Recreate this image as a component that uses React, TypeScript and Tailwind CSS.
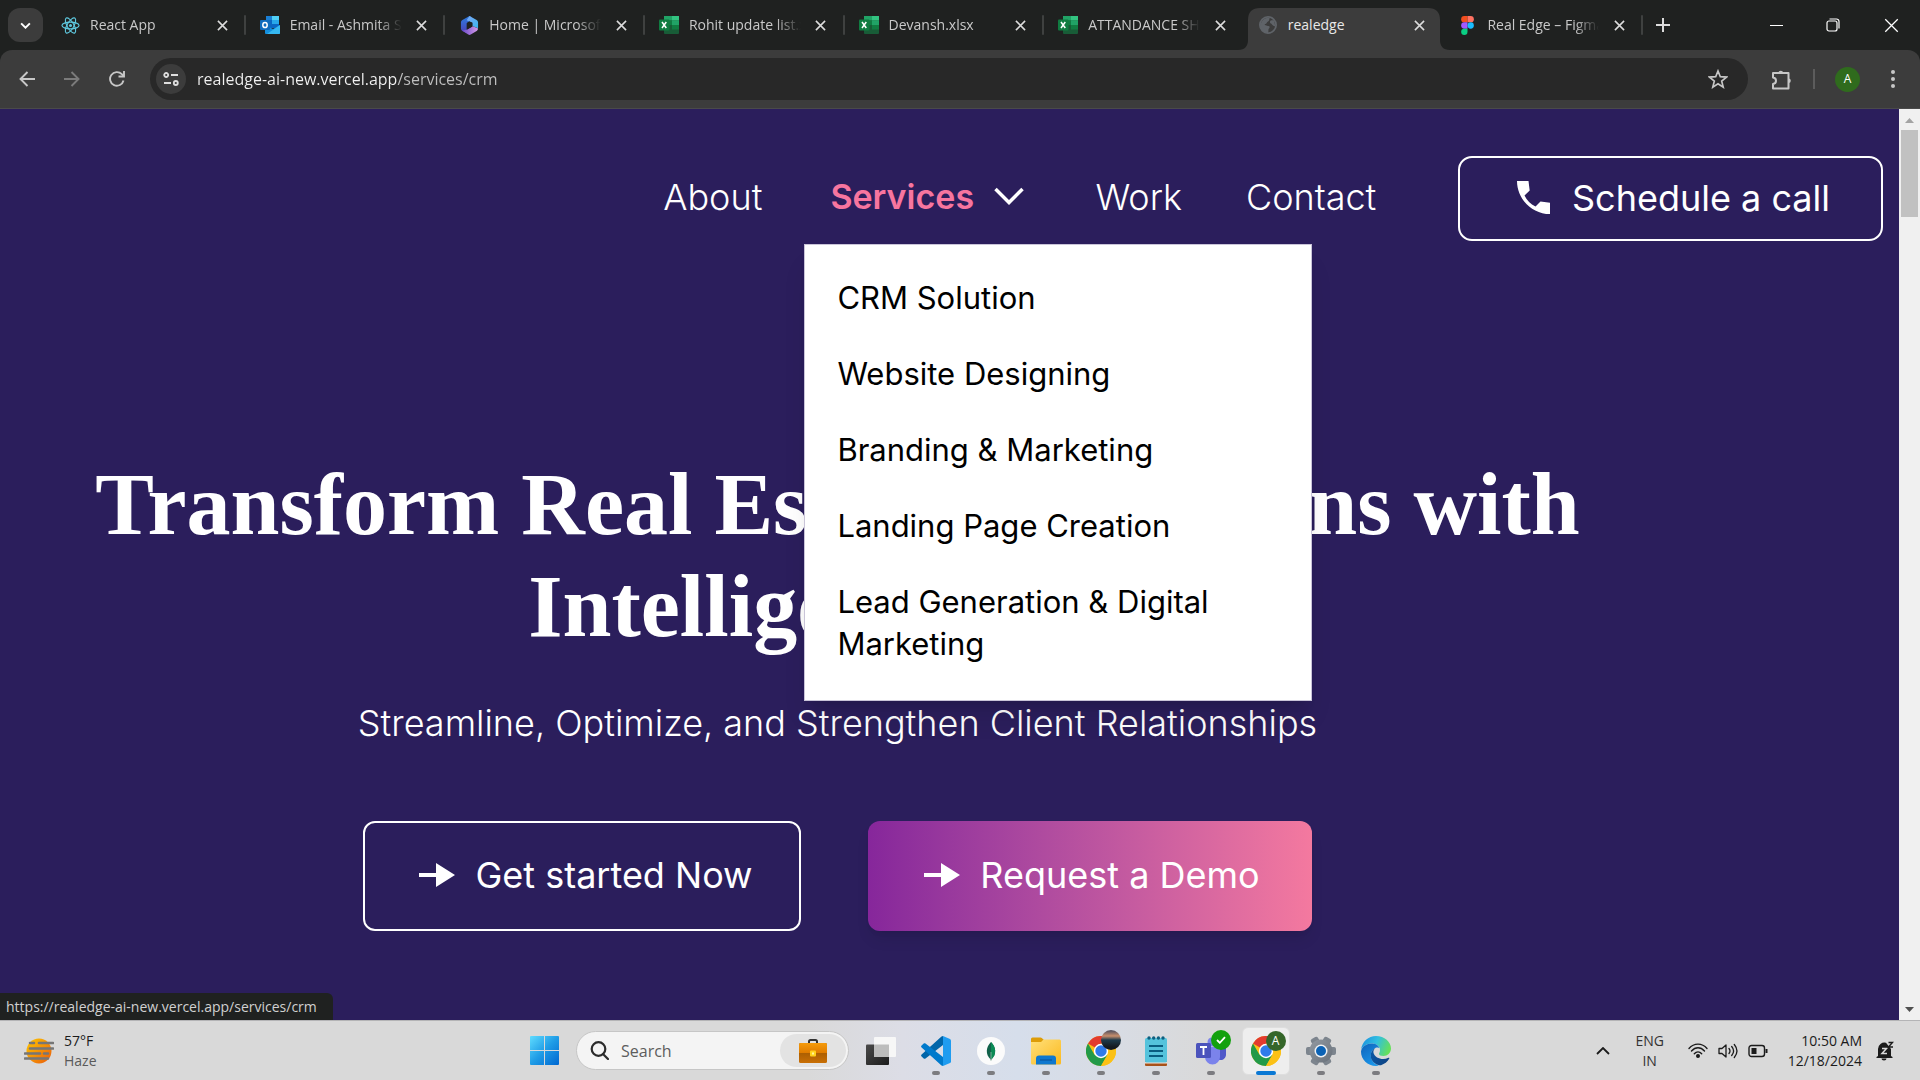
import type { ReactNode } from "react";

const UI = "font-['Open_Sans','Noto_Sans',sans-serif]";

/* ---------- Browser icons ---------- */

const ReactLogo = () => (
  <svg viewBox="0 0 20 20" className="size-[19px]" fill="none" stroke="#5fc9df" strokeWidth="1.2">
    <circle cx="10" cy="10" r="1.6" fill="#5fc9df" stroke="none" />
    <ellipse cx="10" cy="10" rx="9" ry="3.5" />
    <ellipse cx="10" cy="10" rx="9" ry="3.5" transform="rotate(60 10 10)" />
    <ellipse cx="10" cy="10" rx="9" ry="3.5" transform="rotate(120 10 10)" />
  </svg>
);

const OutlookLogo = () => (
  <svg viewBox="0 0 20 18" className="h-[18px] w-5">
    <rect x="6" y="0" width="13" height="12" rx="1" fill="#0a66c2" />
    <rect x="12" y="0" width="7" height="4" fill="#50d0f5" />
    <rect x="6" y="0" width="6" height="4" fill="#1a7fd4" />
    <rect x="12" y="4" width="7" height="4" fill="#28a8ea" />
    <path d="M5 9l8 4 7-4v8a1 1 0 0 1-1 1H6a1 1 0 0 1-1-1z" fill="#1490df" />
    <path d="M20 9v8a1 1 0 0 1-1 1H7z" fill="#35b8f1" />
    <rect x="0" y="4" width="10" height="10" rx="1" fill="#0f6cbd" />
    <ellipse cx="5" cy="9" rx="2.2" ry="2.6" fill="none" stroke="#fff" strokeWidth="1.5" />
  </svg>
);

const OfficeLogo = () => (
  <svg viewBox="0 0 20 20" className="size-[19px]">
    <defs>
      <linearGradient id="of1" x1="0" y1="0" x2="0" y2="1">
        <stop offset="0" stopColor="#2b7de0" />
        <stop offset="1" stopColor="#4c3fb5" />
      </linearGradient>
      <linearGradient id="of2" x1="0" y1="0" x2="1" y2="1">
        <stop offset="0" stopColor="#7fa8f5" />
        <stop offset="1" stopColor="#37b5ee" />
      </linearGradient>
      <linearGradient id="of3" x1="0" y1="0" x2="1" y2="0">
        <stop offset="0" stopColor="#6a48c8" />
        <stop offset="1" stopColor="#d59bea" />
      </linearGradient>
    </defs>
    <path d="M10 0L2.5 4.3C1.6 4.8 1 5.7 1 6.8v6.4c0 1 .6 2 1.5 2.5L7 18V7.5L12 4V1z" fill="url(#of1)" />
    <path d="M10 0l7.5 4.3c.9.5 1.5 1.4 1.5 2.5V13l-6-2.5V7L7 4.500z" fill="url(#of2)" />
    <path d="M2 15.3L8.7 19.600c.8.5 1.8.5 2.6 0l6.2-3.900c.9-.5 1.5-1.5 1.5-2.5l-6-2.7v.5L7 14.5z" fill="url(#of3)" />
    <path d="M13 7v4l-5.500 3.300V7.300l2.500-1.500z" fill="#1f2120" />
  </svg>
);

const ExcelLogo = () => (
  <svg viewBox="0 0 20 18" className="h-[18px] w-5">
    <rect x="5" y="0" width="15" height="18" rx="1" fill="#185c37" />
    <rect x="5" y="0" width="8" height="4.5" fill="#21a366" />
    <rect x="13" y="0" width="7" height="4.5" fill="#33c481" />
    <rect x="5" y="4.5" width="8" height="4.5" fill="#107c41" />
    <rect x="13" y="4.5" width="7" height="4.5" fill="#21a366" />
    <rect x="13" y="9" width="7" height="4.5" fill="#107c41" />
    <rect x="0" y="3.5" width="10.5" height="11" rx="1" fill="#107c41" />
    <path d="M3 6l4.3 6M7.3 6L3 12" stroke="#fff" strokeWidth="1.5" />
  </svg>
);

const GlobeLogo = () => (
  <svg viewBox="0 0 20 20" className="size-[18px]">
    <circle cx="10" cy="10" r="9" fill="#3c3c3c" stroke="#5f6368" strokeWidth="2" />
    <path d="M3 6c3-4 6-4.500 9-4-1 2 0 3-2 4s-1 2.500-3 3 .5 2 3 2 2 2 1 3 0 3-1 5c-5 0-8-3-9-8z" fill="#5f6368" />
    <path d="M13 5c2 0 3-1 4 1l1 5c-2 1-3-1-4-2s-3-2-1-4z" fill="#5f6368" />
  </svg>
);

const FigmaLogo = () => (
  <svg viewBox="0 0 12 18" className="h-[19px] w-[13px]">
    <path d="M3 0h3v6H3a3 3 0 0 1 0-6z" fill="#f24e1e" />
    <path d="M6 0h3a3 3 0 0 1 0 6H6z" fill="#ff7262" />
    <path d="M3 6h3v6H3a3 3 0 0 1 0-6z" fill="#a259ff" />
    <circle cx="9" cy="9" r="3" fill="#1abcfe" />
    <path d="M3 12h3v3a3 3 0 1 1-3-3z" fill="#0acf83" />
  </svg>
);

const Cross = ({ className }: { className: string }) => (
  <svg viewBox="0 0 12 12" className={className} fill="none" stroke="currentColor">
    <path d="M1 1l10 10M11 1L1 11" />
  </svg>
);

type TabInfo = { title: string; icon: ReactNode; active?: boolean; noDivider?: boolean };

const tabs: TabInfo[] = [
  { title: "React App", icon: <ReactLogo /> },
  { title: "Email - Ashmita Singh", icon: <OutlookLogo /> },
  { title: "Home | Microsoft 365", icon: <OfficeLogo /> },
  { title: "Rohit update list.xlsx", icon: <ExcelLogo /> },
  { title: "Devansh.xlsx", icon: <ExcelLogo /> },
  { title: "ATTANDANCE SHEET", icon: <ExcelLogo />, noDivider: true },
  { title: "realedge", icon: <GlobeLogo />, active: true },
  { title: "Real Edge – Figma", icon: <FigmaLogo /> },
];

function Tab({ title, icon, active, noDivider }: TabInfo) {
  return (
    <div className="relative flex h-[50px] w-[200px] shrink items-center pl-3">
      {active && (
        <svg
          viewBox="0 0 212 42"
          preserveAspectRatio="none"
          className="absolute top-2 -left-[6px] h-[42px] w-[212px]"
          fill="#3c3c3c"
        >
          <path d="M0 42c7 0 10-4 10-10V12C10 4 14 0 22 0h168c8 0 12 4 12 12v20c0 6 3 10 10 10z" />
        </svg>
      )}
      <div className="relative flex w-full items-center">
        <span className="flex w-6 shrink-0 justify-center">{icon}</span>
        <span
          className={
            active
              ? "ml-2 w-[112px] overflow-hidden text-sm whitespace-nowrap text-[#e8e8e8]"
              : "ml-2 w-[112px] overflow-hidden [mask-image:linear-gradient(to_right,black_78%,transparent)] text-sm whitespace-nowrap text-[#c9c9c9]"
          }
        >
          {title}
        </span>
        <button aria-label={`Close ${title}`} className="ml-3 flex size-4 shrink-0 items-center justify-center text-[#dcdcdc]">
          <Cross className="size-[11px] stroke-[1.7]" />
        </button>
      </div>
      {!active && !noDivider && <span className="absolute right-0 h-5 w-0.5 rounded bg-[#3f4140]" />}
    </div>
  );
}

function TabStrip() {
  return (
    <div className="flex h-[50px] items-center bg-[#1f2120]">
      <button aria-label="Search tabs" className="ml-2 flex h-[34px] w-[35px] items-center justify-center rounded-xl bg-[#3c3c3c] text-white">
        <svg viewBox="0 0 12 8" className="h-[7px] w-[11px]" fill="none" stroke="currentColor" strokeWidth="2.2">
          <path d="M1 1.5l5 5 5-5" />
        </svg>
      </button>
      <div className="ml-[3px] flex w-[1597px] min-w-0">
        {tabs.map((t) => (
          <Tab key={t.title} {...t} />
        ))}
      </div>
      <button aria-label="New tab" className="ml-[11px] flex size-[18px] items-center justify-center text-[#dcdcdc]">
        <svg viewBox="0 0 14 14" className="size-[14px]" fill="none" stroke="currentColor" strokeWidth="2">
          <path d="M7 0v14M0 7h14" />
        </svg>
      </button>
      <div className="ml-auto flex items-center text-white">
        <button aria-label="Minimize" className="flex h-8 w-14 items-center justify-center">
          <span className="h-px w-[13px] bg-white" />
        </button>
        <button aria-label="Restore" className="flex h-8 w-[58px] items-center justify-center">
          <svg viewBox="0 0 14 14" className="size-[14px]" fill="none" stroke="currentColor" strokeWidth="1.2">
            <rect x="1" y="3" width="10" height="10" rx="2" />
            <path d="M3.5 1H10.5a2.5 2.5 0 0 1 2.5 2.5V10.5" />
          </svg>
        </button>
        <button aria-label="Close window" className="flex h-8 w-[58px] items-center justify-center">
          <Cross className="size-[15px] stroke-[1]" />
        </button>
      </div>
    </div>
  );
}

function Toolbar() {
  return (
    <div className="bg-[#1f2120]">
      <div className="flex h-[59px] items-center rounded-t-xl border-b border-[#4a4a4a] bg-[#3c3c3c] pr-[17px] pl-[17px] text-[#c7c7c7]">
        <button aria-label="Back" className="flex size-5 items-center justify-center">
          <svg viewBox="0 0 16 16" className="size-4" fill="none" stroke="currentColor" strokeWidth="1.9">
            <path d="M16 8H2M8.5 1L1.5 8l7 7" />
          </svg>
        </button>
        <button aria-label="Forward" className="ml-[25px] flex size-5 items-center justify-center text-[#7b7b7b]">
          <svg viewBox="0 0 16 16" className="size-4" fill="none" stroke="currentColor" strokeWidth="1.9">
            <path d="M0 8h14M7.5 1l7 7-7 7" />
          </svg>
        </button>
        <button aria-label="Reload" className="ml-[25px] flex size-5 items-center justify-center">
          <svg viewBox="0 0 16 16" className="size-4" fill="none" stroke="currentColor" strokeWidth="1.9">
            <path d="M14.5 9.5A6.8 6.8 0 1 1 12.8 3.2L14.5 5" />
            <path d="M15 0v5.5H9.5" />
          </svg>
        </button>
        <div className="ml-[23px] flex h-[42px] flex-1 items-center rounded-full bg-[#282828] pr-5 pl-[6px]">
          <button aria-label="View site information" className="flex size-[30px] items-center justify-center rounded-full bg-[#3c3c3c]">
            <svg viewBox="0 0 16 14" className="h-[14px] w-4" fill="none" stroke="#dedede" strokeWidth="1.8">
              <circle cx="3.2" cy="3" r="2" />
              <path d="M8 3h7M1 11h7" />
              <circle cx="12.8" cy="11" r="2" />
            </svg>
          </button>
          <input
            aria-label="Address"
            defaultValue="realedge-ai-new.vercel.app/services/crm"
            className="ml-[11px] flex-1 bg-[linear-gradient(to_right,#f2f2f2_201px,#c0c0c0_201px)] bg-clip-text text-base text-transparent outline-none"
          />
          <button aria-label="Bookmark this tab" className="flex size-5 items-center justify-center">
            <svg viewBox="0 0 20 20" className="size-5" fill="none" stroke="currentColor" strokeWidth="1.7">
              <path d="M10 2l2.3 5.7 6.2.4-4.8 4 1.5 6L10 14.8 4.8 18.1l1.5-6-4.8-4 6.2-.4z" />
            </svg>
          </button>
        </div>
        <button aria-label="Extensions" className="ml-[23px] flex size-[21px] items-center justify-center">
          <svg viewBox="0 0 21 21" className="size-[21px]" fill="none" stroke="currentColor" strokeWidth="2">
            <path d="M2 4h15.5v15.5H2v-4.5c4-.5 4-6 0-6.500z" strokeLinejoin="round" />
            <path d="M7.5 4a2.3 2.3 0 0 1 4.6 0zM17.5 9.5a2.3 2.3 0 0 1 0 4.6z" fill="currentColor" stroke="none" />
          </svg>
        </button>
        <span className="ml-[21px] h-5 w-0.5 bg-[#5c5c5c]" />
        <button aria-label="Profile" className="ml-[20px] flex size-[25px] items-center justify-center rounded-full bg-[#2f6b1d] text-xs text-white">
          A
        </button>
        <button aria-label="Menu" className="ml-[23px] flex h-5 w-5 items-center justify-center">
          <svg viewBox="0 0 4 18" className="h-[18px] w-1" fill="currentColor">
            <circle cx="2" cy="2" r="2" />
            <circle cx="2" cy="9" r="2" />
            <circle cx="2" cy="16" r="2" />
          </svg>
        </button>
      </div>
    </div>
  );
}

/* ---------- Website ---------- */

const services = ["CRM Solution", "Website Designing", "Branding & Marketing", "Landing Page Creation", "Lead Generation & Digital Marketing"];

const ArrowIcon = () => (
  <svg viewBox="0 0 36 24" className="h-6 w-9 shrink-0" fill="currentColor">
    <path d="M0 10h17V0l19 12-19 12V14H0z" />
  </svg>
);

function SiteNav() {
  return (
    <header className="flex h-[132px] items-end justify-end pr-4">
      <nav className="flex h-[85px] items-center text-4xl font-light text-white">
        <a href="#about" className="pb-1">
          About
        </a>
        <div className="relative ml-[68px] flex h-full items-center">
          <button aria-expanded="true" className="flex w-[194px] items-center justify-between pb-1 text-[34px] font-semibold text-[#f7759f]">
            Services
            <svg viewBox="0 0 30 18" className="h-[18px] w-[30px] text-white" fill="none" stroke="currentColor" strokeWidth="3.5">
              <path d="M1.5 2L15 15.5 28.5 2" />
            </svg>
          </button>
          <ul className="absolute top-full -left-[26px] z-10 mt-[3px] flex w-[508px] flex-col gap-[34px] border border-[#c9c4d8] bg-white px-8 pt-8 pb-[35px] text-[31px] leading-[42px] font-normal text-black shadow-xl">
            {services.map((s) => (
              <li key={s}>
                <a href="#services" className="block">
                  {s}
                </a>
              </li>
            ))}
          </ul>
        </div>
        <a href="#work" className="ml-[71px] pb-1">
          Work
        </a>
        <a href="#contact" className="ml-[64px] w-[136px] pb-1">
          Contact
        </a>
        <button className="ml-[76px] flex h-full w-[425px] items-center justify-center gap-[22px] rounded-[14px] border-2 border-white pb-[2px] pl-[6px] font-normal">
          <svg viewBox="0 0 33 33" className="size-[33px]" fill="currentColor">
            <path d="M0 0H11.500L12.700 9.500 7.500 14.500C10 19.500 13.500 23 18.500 25.500L23.500 20.500 33 21.700V33C15 33 0 18 0 0z" />
          </svg>
          Schedule a call
        </button>
      </nav>
    </header>
  );
}

function Hero() {
  return (
    <section className="flex flex-col items-center pt-[213px] pr-[224px] text-center text-white">
      <h1 className="font-['Liberation_Serif',serif] text-[88px] leading-[102px] font-bold whitespace-nowrap">
        Transform Real Estate Operations with
        <br />
        Intelligent CRM
      </h1>
      <p className="mt-[38px] text-4xl leading-[54px] font-light">Streamline, Optimize, and Strengthen Client Relationships</p>
      <div className="mt-[71px] flex gap-[67px] text-4xl font-normal">
        <button className="flex h-[110px] w-[438px] items-center justify-center gap-5 rounded-xl border-2 border-white pb-[2px] pl-2">
          <ArrowIcon />
          Get started Now
        </button>
        <button className="flex h-[110px] w-[444px] items-center justify-center gap-5 rounded-xl bg-linear-to-r from-[#86269b] to-[#f4799f] pb-[2px] pl-1 shadow-lg">
          <ArrowIcon />
          Request a Demo
        </button>
      </div>
    </section>
  );
}

function ScrollBar() {
  return (
    <div className="flex w-[21px] shrink-0 flex-col items-center bg-[#f0f0f0]">
      <svg viewBox="0 0 9 5" className="mt-[9px] h-[5px] w-[9px]" fill="#a3a3a3">
        <path d="M4.500 0L9 5H0z" />
      </svg>
      <div className="mt-[7px] h-[87px] w-[17px] bg-[#c1c1c1]" />
      <svg viewBox="0 0 9 5" className="mt-auto mb-2 h-[5px] w-[9px]" fill="#505050">
        <path d="M4.500 5L9 0H0z" />
      </svg>
    </div>
  );
}

/* ---------- Taskbar ---------- */

const StartIcon = () => (
  <svg viewBox="0 0 29 29" className="size-[29px]">
    <defs>
      <linearGradient id="win" x1="0" y1="0" x2="1" y2="1">
        <stop offset="0" stopColor="#5fdcff" />
        <stop offset="0.5" stopColor="#1f9ce6" />
        <stop offset="1" stopColor="#0067d1" />
      </linearGradient>
    </defs>
    <path d="M1 0h13v14H0V1a1 1 0 0 1 1-1zM15 0h13a1 1 0 0 1 1 1v13H15zM0 15h14v14H1a1 1 0 0 1-1-1zM15 15h14v13a1 1 0 0 1-1 1H15z" fill="url(#win)" />
  </svg>
);

const Briefcase = () => (
  <svg viewBox="0 0 28 24" className="h-6 w-7">
    <defs>
      <linearGradient id="bc" x1="0" y1="0" x2="0" y2="1">
        <stop offset="0" stopColor="#f59b0b" />
        <stop offset="1" stopColor="#e07c00" />
      </linearGradient>
      <linearGradient id="bc2" x1="0" y1="0" x2="0" y2="1">
        <stop offset="0" stopColor="#8f4f00" />
        <stop offset="1" stopColor="#c96f05" />
      </linearGradient>
    </defs>
    <path d="M10 4V2.5C10 1.7 10.7 1 11.5 1h5c.8 0 1.5.7 1.5 1.5V4" fill="none" stroke="#333" strokeWidth="2" />
    <rect x="0" y="4" width="28" height="20" rx="1.5" fill="url(#bc2)" />
    <path d="M1.5 4h25A1.5 1.5 0 0 1 28 5.5V14H0V5.5A1.5 1.5 0 0 1 1.500 4z" fill="url(#bc)" />
    <rect x="11" y="11.5" width="6" height="6" rx="1" fill="#ffd21c" />
    <rect x="13" y="13.5" width="2" height="2" fill="#fff3a0" />
  </svg>
);

const TaskViewIcon = () => (
  <svg viewBox="0 0 30 28" className="h-7 w-[30px]">
    <defs>
      <linearGradient id="tv" x1="0" y1="0" x2="1" y2="1">
        <stop offset="0" stopColor="#4a4a4a" />
        <stop offset="1" stopColor="#1c1c1c" />
      </linearGradient>
    </defs>
    <rect x="0" y="7.5" width="23" height="20.5" rx="1" fill="url(#tv)" />
    <rect x="8" y="0" width="22" height="20" rx="1" fill="#f7f7f7" />
    <path d="M8 7.5h15V20H9a1 1 0 0 1-1-1z" fill="#bdbdbd" />
  </svg>
);

const VSCodeIcon = () => (
  <svg viewBox="0 0 30 30" className="size-[30px]">
    <path d="M22 0v9L4.5 22.5c-.6.5-1.3.4-1.8 0L.6 20.6c-.7-.6-.7-1.5 0-2.1L20.5.4z" fill="#0065a9" />
    <path d="M22 30v-9L4.5 7.5c-.6-.5-1.3-.4-1.8 0L.6 9.4c-.7.6-.7 1.5 0 2.1L20.5 29.6z" fill="#007acc" />
    <path d="M22 0l7 3c.6.3 1 .9 1 1.6v20.8c0 .7-.4 1.3-1 1.6l-7 3z" fill="#1f9cf0" />
  </svg>
);

const MongoIcon = () => (
  <svg viewBox="0 0 28 28" className="size-7">
    <circle cx="14" cy="14" r="14" fill="#fbfbfb" />
    <path d="M14 5c5 5 6 12 .4 17.5L14 24l-.4-1.5C8 17 9 10 14 5z" fill="#116149" />
    <path d="M14 5c5 5 6 12 .4 17.5L14 22z" fill="#0b8a55" />
    <path d="M13.7 15h.6v9h-.6z" fill="#c5d5ca" />
  </svg>
);

const FolderIcon = () => (
  <svg viewBox="0 0 30 28" className="h-7 w-[30px]">
    <defs>
      <linearGradient id="fo" x1="0" y1="0" x2="1" y2="1">
        <stop offset="0" stopColor="#ffe07a" />
        <stop offset="1" stopColor="#fbb91f" />
      </linearGradient>
    </defs>
    <path d="M0 2a1.5 1.5 0 0 1 1.5-1.5h8c.5 0 1 .2 1.3.6L13 3v5H0z" fill="#dd9c08" />
    <path d="M10 5l2.5-2.5H28.5A1.5 1.5 0 0 1 30 4v22a1.5 1.5 0 0 1-1.5 1.5h-27A1.5 1.5 0 0 1 0 26V5z" fill="url(#fo)" />
    <path d="M5 27.5v-6a3 3 0 0 1 3-3h14a3 3 0 0 1 3 3v6z" fill="#0f78cf" />
    <path d="M9 23h12" stroke="#0a4f96" strokeWidth="1" />
  </svg>
);

const ChromeIcon = () => (
  <svg viewBox="0 0 30 30" className="size-[30px]">
    <circle cx="15" cy="15" r="15" fill="#fbc116" />
    <path d="M15 15L2 7.5A15 15 0 0 1 28 7.5H15z" fill="#e33b2e" />
    <path d="M2 7.5A15 15 0 0 0 15 30l6.500-11.250L15 15 8.500 18.750z" fill="#229a48" />
    <path d="M28 7.500H15l6.500 11.250L15 30A15 15 0 0 0 28 7.500z" fill="#fbc116" />
    <circle cx="15" cy="15" r="7.2" fill="#fff" />
    <circle cx="15" cy="15" r="5.7" fill="#2f7bea" />
  </svg>
);

const NotepadIcon = () => (
  <svg viewBox="0 0 22 30" className="h-[30px] w-[22px]">
    <rect x="0" y="25" width="22" height="5" rx="1" fill="#a8521a" />
    <rect x="0" y="26" width="22" height="1.5" fill="#f2e6dc" />
    <rect x="0" y="2" width="22" height="24.5" rx="1.5" fill="#55c3dc" />
    <path d="M4 10h14M4 15h14M4 20h14" stroke="#0a5d80" strokeWidth="2" />
    <g fill="#0e5f7f">
      <circle cx="4" cy="2" r="1.7" />
      <circle cx="8.7" cy="2" r="1.7" />
      <circle cx="13.4" cy="2" r="1.7" />
      <circle cx="18" cy="2" r="1.7" />
    </g>
  </svg>
);

const TeamsIcon = () => (
  <svg viewBox="0 0 30 28" className="h-7 w-[30px]">
    <circle cx="24.5" cy="6" r="3.5" fill="#5059c9" />
    <path d="M20 10h9a1 1 0 0 1 1 1v7a5.500 5.500 0 0 1-8 4.500z" fill="#5059c9" />
    <circle cx="16" cy="5" r="4.5" fill="#7b83eb" />
    <path d="M9 10h14a1 1 0 0 1 1 1v9a7.500 7.500 0 0 1-15 0z" fill="#7b83eb" />
    <rect x="0" y="6" width="15" height="15" rx="1.5" fill="#4b53bc" />
    <path d="M4 10h7M7.5 10v8" stroke="#fff" strokeWidth="1.8" />
  </svg>
);

const GearIcon = () => (
  <svg viewBox="0 0 30 30" className="size-[30px]">
    <defs>
      <linearGradient id="ge" x1="0" y1="0" x2="1" y2="1">
        <stop offset="0" stopColor="#939aa2" />
        <stop offset="1" stopColor="#68707a" />
      </linearGradient>
    </defs>
    <g fill="#7d858e">
      <rect x="11" y="0" width="8" height="30" rx="2" transform="rotate(30 15 15)" />
      <rect x="11" y="0" width="8" height="30" rx="2" transform="rotate(90 15 15)" />
      <rect x="11" y="0" width="8" height="30" rx="2" transform="rotate(150 15 15)" />
    </g>
    <circle cx="15" cy="15" r="11.5" fill="url(#ge)" />
    <circle cx="15" cy="15" r="6.5" fill="#eef1f4" />
    <circle cx="15" cy="15" r="5" fill="#0b62b5" />
  </svg>
);

const EdgeIcon = () => (
  <svg viewBox="0 0 30 30" className="size-[30px]">
    <defs>
      <linearGradient id="ed1" x1="0" y1="0.2" x2="1" y2="0.5">
        <stop offset="0" stopColor="#1b8fe0" />
        <stop offset="0.5" stopColor="#31bfe0" />
        <stop offset="1" stopColor="#66e05a" />
      </linearGradient>
      <linearGradient id="ed2" x1="0" y1="0" x2="0.6" y2="1">
        <stop offset="0" stopColor="#0f62ba" />
        <stop offset="1" stopColor="#1a96ea" />
      </linearGradient>
      <linearGradient id="ed3" x1="0" y1="0" x2="1" y2="0.5">
        <stop offset="0" stopColor="#0a5aa8" />
        <stop offset="1" stopColor="#0e4587" />
      </linearGradient>
    </defs>
    <path d="M0 14C1 5.5 7.5 0 15 0c8.5 0 15 6 15 12.5 0 4.5-3.5 7.5-7.5 7.5-3 0-4.5-1-4.5-2s1-1.5 1-4c0-4-3.5-6.500-8-6.500-6 0-10 3.500-11 6.500z" fill="url(#ed1)" />
    <path d="M0 15.5C.5 10.5 5.5 7.5 11 7.5c4 0 6.5 2 7.5 4.5-2-1.500-7 0-8.500 5.500-1.200 5 2 10.500 8 12-1 .3-2 .5-3 .5C6.5 30 0 23.5 0 15.5z" fill="url(#ed2)" />
    <path d="M14.5 12c-5.500 2.500-6 9-3 13 3 4 7 4.500 8.500 4.200 3.500-1.200 6.500-3.400 8.300-6.700.3-.6-.3-1-.9-.7C22 24.500 14 22.500 12.500 17c-.4-2 .4-4 2-5z" fill="url(#ed3)" />
  </svg>
);

const ProfileBadge = ({ photo }: { photo?: boolean }) => (
  <span
    className={
      photo
        ? "absolute top-[3px] right-[5px] size-5 rounded-full bg-[linear-gradient(to_bottom,#5b5560_5%,#c98f6c_30%,#1d3a4c_50%,#14191f_85%)]"
        : "absolute top-[3px] right-[3px] flex size-5 items-center justify-center rounded-full bg-[#35662a] text-xs text-white"
    }
  >
    {photo ? "" : "A"}
  </span>
);

const CheckBadge = () => (
  <span className="absolute top-[3px] right-[5px] flex size-5 items-center justify-center rounded-full bg-[#13a10e]">
    <svg viewBox="0 0 10 8" className="h-2 w-[10px]" fill="none" stroke="#fff" strokeWidth="1.8">
      <path d="M1 4l2.8 2.8L9 1.2" />
    </svg>
  </span>
);

type TaskApp = { name: string; icon: ReactNode; badge?: ReactNode; state?: "open" | "active" };

const apps: TaskApp[] = [
  { name: "Task view", icon: <TaskViewIcon /> },
  { name: "Visual Studio Code", icon: <VSCodeIcon />, state: "open" },
  { name: "MongoDB Compass", icon: <MongoIcon />, state: "open" },
  { name: "File Explorer", icon: <FolderIcon />, state: "open" },
  { name: "Chrome", icon: <ChromeIcon />, badge: <ProfileBadge photo />, state: "open" },
  { name: "Notepad", icon: <NotepadIcon />, state: "open" },
  { name: "Teams", icon: <TeamsIcon />, badge: <CheckBadge />, state: "open" },
  { name: "Chrome (A)", icon: <ChromeIcon />, badge: <ProfileBadge />, state: "active" },
  { name: "Settings", icon: <GearIcon />, state: "open" },
  { name: "Edge", icon: <EdgeIcon />, state: "open" },
];

function TaskButton({ name, icon, badge, state }: TaskApp) {
  return (
    <div className="flex w-[55px] justify-center">
      <button
        aria-label={name}
        className={
          state === "active"
            ? "relative flex h-12 w-12 items-center justify-center rounded-md border border-[#dedede] bg-[#eeeeee]"
            : "relative flex h-12 w-[50px] items-center justify-center"
        }
      >
        {icon}
        {badge}
        {state === "open" && <span className="absolute bottom-0 h-1 w-2 rounded-full bg-[#7c7c80]" />}
        {state === "active" && <span className="absolute -bottom-px h-1 w-5 rounded-full bg-[#0a78d4]" />}
      </button>
    </div>
  );
}

function Taskbar() {
  return (
    <footer className="grid h-[60px] shrink-0 grid-cols-[1fr_auto_1fr] items-center border-t border-[#b4b4b6] bg-[linear-gradient(to_right,#d9d9d9_42%,#dcdde6_47%,#d6deeb_53%,#d8dce4_58%,#d9d9d9_63%)] text-sm leading-5 text-[#1b1b1b]">
      <button className="flex items-center gap-[10px] pl-6 text-left">
        <svg viewBox="0 0 30 26" className="h-[26px] w-[30px]">
          <defs>
            <linearGradient id="haze" x1="0" y1="0" x2="1" y2="1">
              <stop offset="0" stopColor="#ffc800" />
              <stop offset="1" stopColor="#e95b0c" />
            </linearGradient>
          </defs>
          <circle cx="15" cy="13" r="12.5" fill="url(#haze)" />
          <path d="M6 5h4M15 5h14M6 10.5h23M1 15.5h15M20 15.5h4M1 20.5h23" stroke="#767676" strokeWidth="2.6" strokeLinecap="round" />
        </svg>
        <span>
          <span className="block">57°F</span>
          <span className="block text-[#5a5a5a]">Haze</span>
        </span>
      </button>
      <div className="flex items-center">
        <button aria-label="Start" className="flex w-[55px] justify-center">
          <StartIcon />
        </button>
        <label className="mr-1 ml-1 flex h-[39px] w-[273px] items-center rounded-full border border-[#c6c6c6] bg-[#f4f4f4] pr-[2px] pl-[13px]">
          <svg viewBox="0 0 19 19" className="size-[19px] shrink-0" fill="none" stroke="#2b2b2b" strokeWidth="2.2">
            <circle cx="8.5" cy="8" r="6.8" />
            <path d="M13 13l5 5" strokeLinecap="round" />
          </svg>
          <input type="search" aria-label="Search" placeholder="Search" className="ml-[12px] w-0 flex-1 text-base outline-none placeholder:text-[#5d5d5d]" />
          <span className="flex h-[33px] w-[66px] items-center justify-center rounded-full bg-[#e3e3e3]">
            <Briefcase />
          </span>
        </label>
        {apps.map((a) => (
          <TaskButton key={a.name} {...a} />
        ))}
      </div>
      <div className="flex items-center justify-end pr-[26px]">
        <button aria-label="Show hidden icons">
          <svg viewBox="0 0 14 8" className="h-2 w-[14px]" fill="none" stroke="currentColor" strokeWidth="1.8">
            <path d="M1 7l6-6 6 6" />
          </svg>
        </button>
        <button className="ml-6 w-8 text-center text-[#333]">
          ENG
          <br />
          IN
        </button>
        <svg viewBox="0 0 20 15" className="ml-[22px] h-[15px] w-5" fill="none" stroke="currentColor" strokeWidth="1.4" strokeLinecap="round">
          <path d="M1 5.5C6-.3 14-.3 19 5.5M3.5 8c4-4.3 9-4.3 13 0M6.3 10.7c2.3-2.4 5.1-2.4 7.4 0" />
          <circle cx="10" cy="13" r="1.3" fill="currentColor" />
        </svg>
        <svg viewBox="0 0 20 16" className="ml-[10px] h-4 w-5" fill="none" stroke="currentColor" strokeWidth="1.3" strokeLinecap="round">
          <path d="M1 5.500h3L8 2v12l-4-3.500H1z" strokeLinejoin="round" />
          <path d="M11 5.500c1.200 1.500 1.200 3.500 0 5M13.700 3.500c2.300 2.700 2.300 6.300 0 9M16.300 1.500c3.300 4 3.300 9 0 13" />
        </svg>
        <svg viewBox="0 0 20 14" className="ml-[10px] h-[14px] w-5" fill="none" stroke="currentColor" strokeWidth="1.4">
          <rect x="1" y="1.5" width="15.5" height="11" rx="2.5" />
          <rect x="3.5" y="4" width="5" height="6" fill="currentColor" stroke="none" />
          <path d="M18.5 5v4" strokeWidth="2" />
        </svg>
        <button className="ml-[20px] text-right">
          10:50 AM
          <br />
          12/18/2024
        </button>
        <button aria-label="Notifications" className="ml-[14px]">
          <svg viewBox="0 0 18 20" className="h-5 w-[18px]" fill="currentColor">
            <path d="M2 15V8a6.5 6.5 0 0 1 8-6.300l5 6.300v7l1.500 1v1H.500v-1z" />
            <path d="M5.500 17.500h5a2.500 2 0 0 1-5 0z" />
            <path d="M6 7.500h4.500L6 12.500h5" fill="none" stroke="#d9d9d9" strokeWidth="1.5" />
            <path d="M12.500 1.500h4L12.500 6H17" fill="none" stroke="currentColor" strokeWidth="1.4" />
          </svg>
        </button>
      </div>
    </footer>
  );
}

export default function App() {
  return (
    <div className={`flex h-screen flex-col overflow-hidden ${UI}`}>
      <TabStrip />
      <Toolbar />
      <div className="relative flex min-h-0 flex-1">
        <main className="min-w-0 flex-1 bg-[#2b1e5c] font-['Inter',sans-serif]">
          <SiteNav />
          <Hero />
        </main>
        <ScrollBar />
        <div className="absolute bottom-0 left-0 rounded-tr-md bg-[#1f2120] py-1 pr-4 pl-[6px] text-sm leading-[19px] text-[#d0d0d0]">
          https://realedge-ai-new.vercel.app/services/crm
        </div>
      </div>
      <Taskbar />
    </div>
  );
}
